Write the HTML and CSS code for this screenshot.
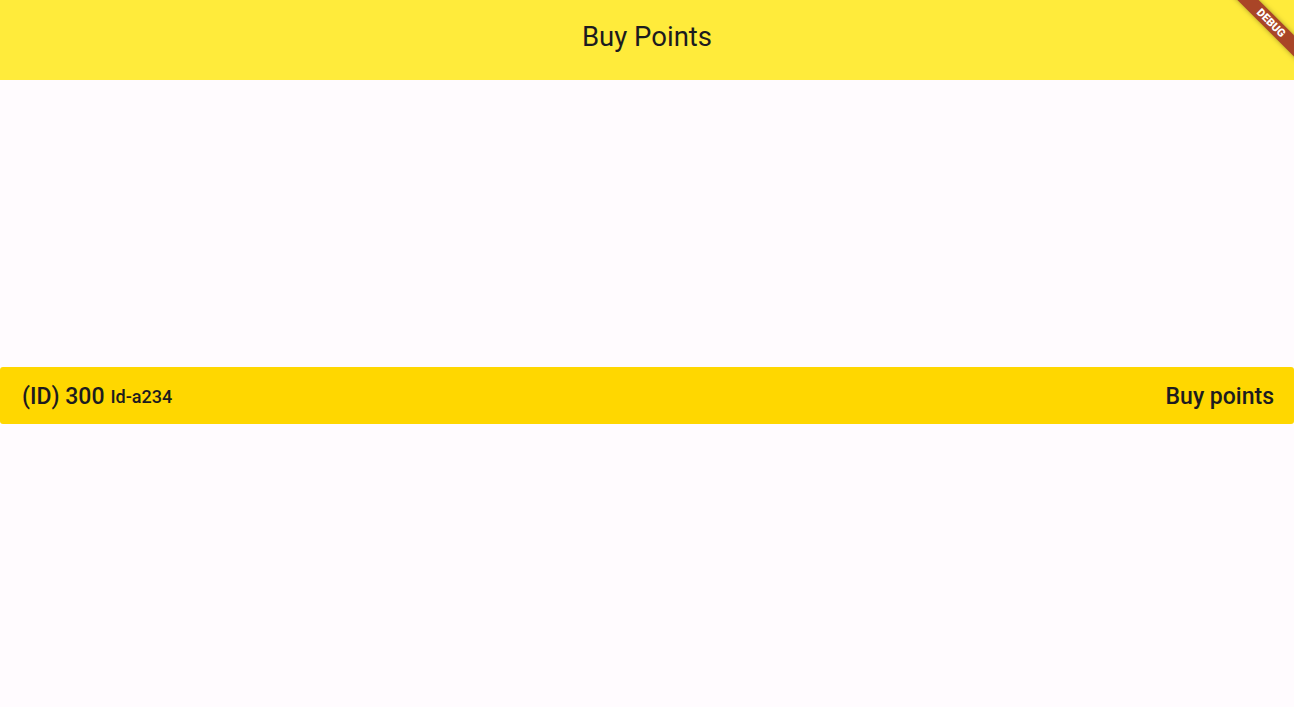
FILE: index.html
```html
<!DOCTYPE html>
<html>
<head>
<meta charset="utf-8">
<link rel="stylesheet" href="styles.css">
</head>
<body>
<div class="app">
  <header class="appbar"><h1 class="title">Buy Points</h1></header>
  <main class="content">
    <div class="bar">
      <div class="left">
        <span class="points">(ID) 300</span>
        <span class="id">Id-a234</span>
      </div>
      <span class="buy">Buy points</span>
    </div>
  </main>
  <div class="banner">DEBUG</div>
</div>
</body>
</html>
```
FILE: styles.css
```css
html, body {
  margin: 0;
  padding: 0;
  height: 100%;
  overflow: hidden;
}
body {
  background: #fffbfe;
  font-family: Roboto, "Noto Sans", sans-serif;
  color: #1c1b1f;
}
.app {
  position: relative;
  height: 707px;
  display: flex;
  flex-direction: column;
  overflow: hidden;
}
.appbar {
  height: 80px;
  box-sizing: border-box;
  padding-bottom: 6px;
  flex: none;
  background: #ffeb3b;
  display: flex;
  align-items: center;
  justify-content: center;
}
.title {
  margin: 0;
  font-size: 27.5px;
  font-weight: 400;
  line-height: 1;
}
.content {
  flex: 1;
  display: flex;
  flex-direction: column;
  justify-content: center;
  padding-top: 4px;
}
.bar {
  height: 57px;
  box-sizing: border-box;
  padding: 2px 20px 0 22px;
  background: #ffd700;
  border-radius: 3px;
  display: flex;
  align-items: center;
  justify-content: space-between;
}
.left {
  display: flex;
  align-items: baseline;
  gap: 6px;
}
.points {
  font-size: 23px;
  font-weight: 500;
}
.id {
  font-size: 18px;
  font-weight: 500;
  position: relative;
  top: -1px;
}
.buy {
  font-size: 23px;
  font-weight: 500;
}
.banner {
  position: absolute;
  top: 25px;
  right: -50px;
  width: 100px;
  height: 15px;
  transform-origin: 50px -25px;
  transform: rotate(45deg);
  background: #a94527;
  box-shadow: 0 0 5px rgba(0, 0, 0, 0.35);
  color: #fff;
  font-size: 11px;
  font-weight: 900;
  line-height: 15px;
  text-align: center;
}
```
